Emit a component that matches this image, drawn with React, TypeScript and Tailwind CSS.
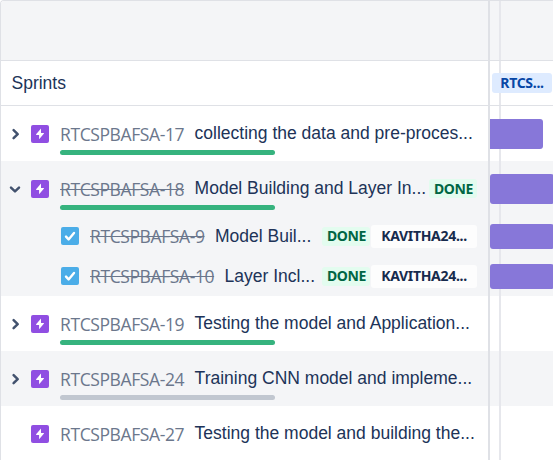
type Badge = { text: string; kind: 'done' | 'epic' };

type Row = {
  id: string;
  title: string;
  child?: boolean;
  struck?: boolean;
  shaded?: boolean;
  chevron?: 'right' | 'down';
  progress?: string;
  badges?: Badge[];
  bar?: string;
};

const rows: Row[] = [
  { id: 'RTCSPBAFSA-17', title: 'collecting the data and pre-proces...', chevron: 'right', progress: 'bg-[#36b37e]', bar: 'mt-[13px] h-[30px] w-[53px] rounded-r-[3px]' },
  { id: 'RTCSPBAFSA-18', title: 'Model Building and Layer In...', chevron: 'down', struck: true, shaded: true, progress: 'bg-[#36b37e]', badges: [{ text: 'DONE', kind: 'done' }], bar: 'mt-[13px] h-[30px] w-[64px] rounded-[3px]' },
  { id: 'RTCSPBAFSA-9', title: 'Model Buil...', child: true, struck: true, shaded: true, badges: [{ text: 'DONE', kind: 'done' }, { text: 'KAVITHA24...', kind: 'epic' }], bar: 'mt-[8px] h-[25px] w-[64px] rounded-[3px]' },
  { id: 'RTCSPBAFSA-10', title: 'Layer Incl...', child: true, struck: true, shaded: true, badges: [{ text: 'DONE', kind: 'done' }, { text: 'KAVITHA24...', kind: 'epic' }], bar: 'mt-[8px] h-[25px] w-[64px] rounded-[3px]' },
  { id: 'RTCSPBAFSA-19', title: 'Testing the model and Application...', chevron: 'right', progress: 'bg-[#36b37e]' },
  { id: 'RTCSPBAFSA-24', title: 'Training CNN model and impleme...', chevron: 'right', shaded: true, progress: 'bg-[#c1c7d0]' },
  { id: 'RTCSPBAFSA-27', title: 'Testing the model and building the...' },
];

function Chevron({ dir }: { dir: 'right' | 'down' }) {
  return (
    <svg viewBox="0 0 14 14" className="h-[14px] w-[14px]" fill="none" stroke="#42526e" strokeWidth="2.5" strokeLinecap="round" strokeLinejoin="round">
      <path d={dir === 'right' ? 'M5.6 3.2 9.7 7.2 5.6 11.2' : 'M3 5.6 7 9.4 11 5.6'} />
    </svg>
  );
}

function EpicIcon() {
  return (
    <svg viewBox="0 0 18 18" className="h-[18px] w-[18px] shrink-0">
      <rect width="18" height="18" rx="2" fill="#904ee2" />
      <path d="M10 3.6 5.1 9.3Q4.9 10 5.5 10H8.1V14.3L13 8.6Q13.2 8 12.6 8H10Z" fill="#fff" />
    </svg>
  );
}

function TaskIcon() {
  return (
    <svg viewBox="0 0 18 18" className="h-[18px] w-[18px] shrink-0">
      <rect width="18" height="18" rx="2" fill="#4bade8" />
      <path d="M5 9.6 7.6 12.4 13 6" fill="none" stroke="#fff" strokeWidth="2.4" strokeLinecap="round" strokeLinejoin="round" />
    </svg>
  );
}

function Lozenge({ badge }: { badge: Badge }) {
  return badge.kind === 'done' ? (
    <span className="flex h-[19px] w-[48px] items-center justify-center rounded-[3px] bg-[#e3fcef] pb-px pl-px font-['Noto_Sans',sans-serif] text-[14px] font-bold tracking-[-0.4px] text-[#006644]">{badge.text}</span>
  ) : (
    <span className="ml-px flex h-[23px] w-[106px] items-center justify-center rounded-[3px] bg-[#fdfdfd] pb-px font-['Noto_Sans',sans-serif] text-[14px] font-bold tracking-[-0.3px] text-[#172b4d]">{badge.text}</span>
  );
}

function IssueRow({ row }: { row: Row }) {
  return (
    <div className={`flex ${row.child ? 'h-[40px]' : 'h-[55px]'} ${row.shaded ? 'bg-[#f4f5f7]' : 'bg-white'}`}>
      <div className="flex w-[487px] shrink-0 flex-col">
        <div className={`flex items-center pr-[11px] ${row.child ? 'h-[40px] pl-[60px]' : 'h-[44px] pt-[11px] pl-[7px]'}`}>
          {!row.child && <span className="mr-[9px] w-[14px] shrink-0">{row.chevron && <Chevron dir={row.chevron} />}</span>}
          {row.child ? <TaskIcon /> : <EpicIcon />}
          <span className={`ml-[11px] shrink-0 font-['Open_Sans','Noto_Sans',sans-serif] text-[17.5px] leading-[22px] tracking-[-0.4px] whitespace-nowrap text-[#6b778c] ${row.struck ? 'line-through' : ''}`}>{row.id}</span>
          <span className="ml-[10.5px] shrink-0 pb-px font-['Liberation_Sans',Arial,sans-serif] text-[17.5px] leading-[22px] whitespace-nowrap text-[#203358]">{row.title}</span>
          {row.badges && <span className="ml-auto flex items-center">{row.badges.map((b) => <Lozenge key={b.text} badge={b} />)}</span>}
        </div>
        {row.progress && <div className={`ml-[59px] h-[5px] w-[215px] rounded-full ${row.progress}`} />}
      </div>
      <div className="w-[2px] shrink-0 bg-[#dfe1e6]" />
      <div className="flex min-w-0 flex-1 items-start overflow-hidden bg-[linear-gradient(#e6e7ec,#e6e7ec)] bg-[length:2px_100%] bg-[position:9px_0] bg-no-repeat">
        {row.bar && <div className={`shrink-0 bg-[#8777d9] ${row.bar}`} />}
      </div>
    </div>
  );
}

export default function App() {
  return (
    <div className="h-[460px] w-[553px] overflow-hidden bg-white">
      <div className="flex h-[460px] flex-col overflow-hidden rounded-tl-[4px] border-t border-l border-[#dfe1e6] *:shrink-0">
        <div className="flex h-[60px] border-b border-[#dfe1e6] bg-[#f4f5f7]">
          <div className="w-[487px]" />
          <div className="w-[2px] bg-[#dfe1e6]" />
          <div className="ml-[9px] w-[2px] bg-[#e6e7ec]" />
        </div>
        <div className="flex h-[45px] border-b border-[#dfe1e6] bg-white">
          <div className="flex w-[487px] items-center pl-[10.5px] font-['Liberation_Sans',Arial,sans-serif] text-[17.5px] text-[#203358]">Sprints</div>
          <div className="w-[2px] bg-[#dfe1e6]" />
          <div className="flex flex-1 items-center bg-[linear-gradient(#e6e7ec,#e6e7ec)] bg-[length:2px_100%] bg-[position:9px_0] bg-no-repeat pl-[2px]">
            <span className="flex h-[20px] w-[60px] items-center justify-center rounded-[3px] bg-[#deebff] pb-px font-['Noto_Sans',sans-serif] text-[14px] font-bold tracking-[-0.3px] text-[#0747a6]">RTCS...</span>
          </div>
        </div>
        {rows.map((r) => <IssueRow key={r.id} row={r} />)}
      </div>
    </div>
  );
}
